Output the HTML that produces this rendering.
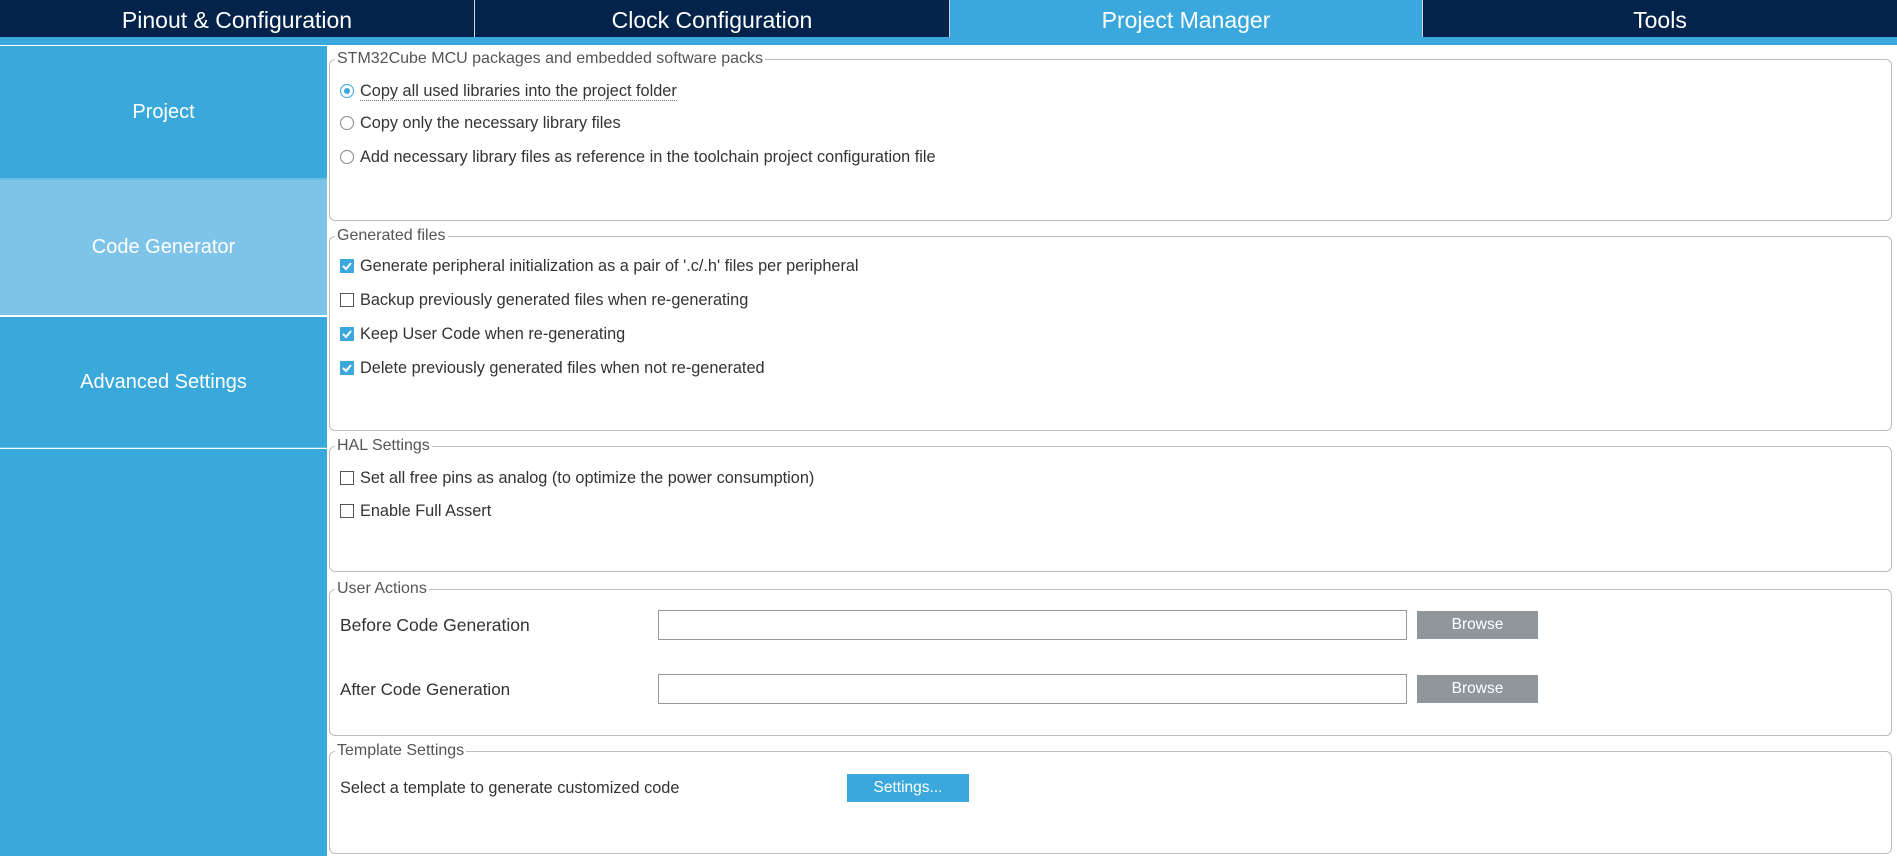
<!DOCTYPE html>
<html><head><meta charset="utf-8"><style>
*{margin:0;padding:0;box-sizing:border-box}
body{width:1897px;height:856px;background:#fff;font-family:"Liberation Sans",sans-serif;position:relative;overflow:hidden;color:#333}
.a{position:absolute}
.tab{position:absolute;top:0;height:37px;background:#03234b;color:#fff;font-size:23px;text-align:center;line-height:40px;border-left:1px solid #c8d4e0}
.side{position:absolute;left:0;width:327px;background:#39a9dc;color:#fff;font-size:20px;text-align:center}
.box{position:absolute;left:329px;width:1563px;border:1px solid #b9bec4;border-radius:6px}
.lg{position:absolute;left:5px;top:-10px;background:#fff;padding:0 2px;font-size:16px;color:#555;line-height:18px}
.it{position:absolute;left:360px;font-size:16.3px;line-height:18px;color:#333}
.rb{position:absolute;left:340px;width:14px;height:14px;border:1px solid #888;border-radius:50%;background:#fff}
.cb{position:absolute;left:340px;width:14px;height:14px;border:1px solid #555;background:#fff}
.cb.on{background:#3aa8dc;border-color:#3aa8dc}
.inp{position:absolute;left:658px;width:749px;height:30px;border:1px solid #999;background:#fff}
.br{position:absolute;left:1417px;width:121px;height:28px;background:#8f969c;color:#fff;font-size:15.5px;text-align:center;line-height:28px}
</style></head><body>
<div class="a" style="left:0;top:0;width:1897px;height:45px;background:#3aa8dc"></div>
<div class="tab" style="left:0;width:474px;border-left:none">Pinout &amp; Configuration</div>
<div class="tab" style="left:474px;width:475px">Clock Configuration</div>
<div class="tab" style="left:949px;width:473px;background:#3aa8dc">Project Manager</div>
<div class="tab" style="left:1422px;width:475px">Tools</div>

<div class="side" style="top:46px;height:132px;line-height:132px">Project</div>
<div class="side" style="top:180px;height:135px;line-height:135px;background:#7dc4e8">Code Generator</div>
<div class="side" style="top:317px;height:130px;line-height:130px">Advanced Settings</div>
<div class="side" style="top:449px;height:407px"></div>
<div class="a" style="left:0;top:178px;width:327px;height:2px;background:#6cbde6"></div>
<div class="a" style="left:0;top:447px;width:327px;height:1px;background:#6cbde6"></div>

<div class="box" style="top:59px;height:162px"><div class="lg">STM32Cube MCU packages and embedded software packs</div></div>
<div class="rb" style="top:84px;border-color:#3aa8dc"><div class="a" style="left:3px;top:3px;width:6px;height:6px;border-radius:50%;background:#3aa8dc"></div></div>
<div class="it" style="top:82px;border-bottom:1px dotted #777">Copy all used libraries into the project folder</div>
<div class="rb" style="top:116px"></div><div class="it" style="top:114px">Copy only the necessary library files</div>
<div class="rb" style="top:150px"></div><div class="it" style="top:148px">Add necessary library files as reference in the toolchain project configuration file</div>

<div class="box" style="top:236px;height:195px"><div class="lg">Generated files</div></div>
<div class="cb on" style="top:259px"><svg width="12" height="12" class="a"><path d="M2 6l3 3 5-6" stroke="#fff" stroke-width="2" fill="none"/></svg></div><div class="it" style="top:257px">Generate peripheral initialization as a pair of '.c/.h' files per peripheral</div>
<div class="cb" style="top:293px"></div><div class="it" style="top:291px">Backup previously generated files when re-generating</div>
<div class="cb on" style="top:327px"><svg width="12" height="12" class="a"><path d="M2 6l3 3 5-6" stroke="#fff" stroke-width="2" fill="none"/></svg></div><div class="it" style="top:325px">Keep User Code when re-generating</div>
<div class="cb on" style="top:361px"><svg width="12" height="12" class="a"><path d="M2 6l3 3 5-6" stroke="#fff" stroke-width="2" fill="none"/></svg></div><div class="it" style="top:359px">Delete previously generated files when not re-generated</div>

<div class="box" style="top:446px;height:126px"><div class="lg">HAL Settings</div></div>
<div class="cb" style="top:471px"></div><div class="it" style="top:469px">Set all free pins as analog (to optimize the power consumption)</div>
<div class="cb" style="top:504px"></div><div class="it" style="top:502px">Enable Full Assert</div>

<div class="box" style="top:589px;height:147px"><div class="lg">User Actions</div></div>
<div class="it" style="left:340px;top:616px;font-size:17.5px">Before Code Generation</div>
<div class="inp" style="top:610px"></div><div class="br" style="top:611px">Browse</div>
<div class="it" style="left:340px;top:681px;font-size:17px">After Code Generation</div>
<div class="inp" style="top:674px"></div><div class="br" style="top:675px">Browse</div>

<div class="box" style="top:751px;height:103px"><div class="lg">Template Settings</div></div>
<div class="it" style="left:340px;top:779px">Select a template to generate customized code</div>
<div class="br" style="left:847px;top:774px;width:122px;background:#3aa8dc">Settings...</div>
</body></html>
